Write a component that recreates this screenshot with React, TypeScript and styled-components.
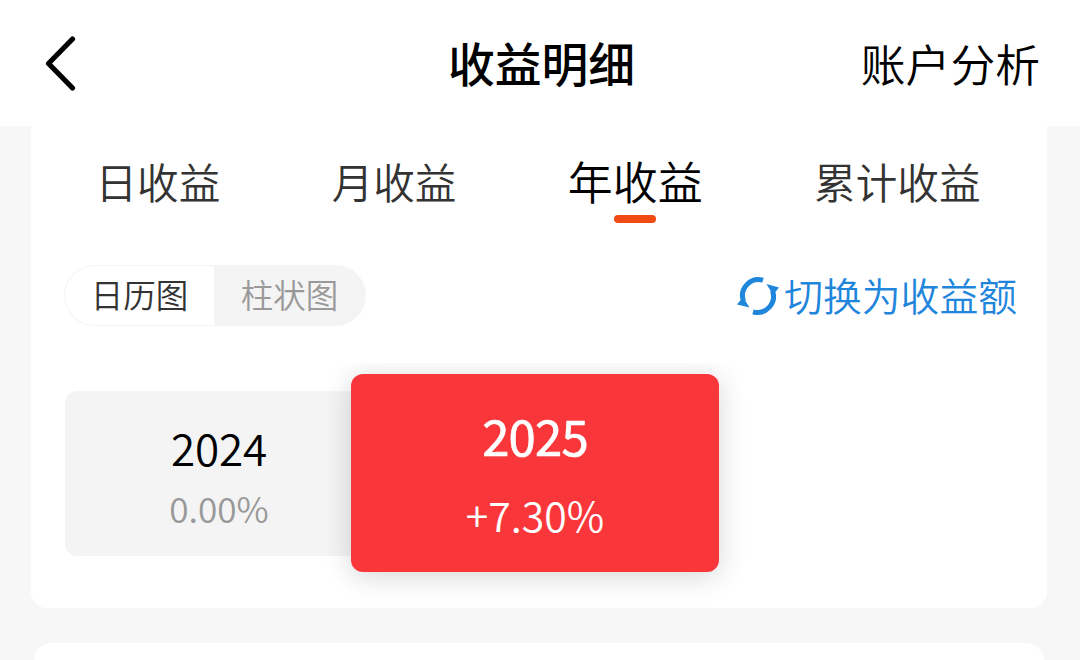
import React from 'react';
import styled, { createGlobalStyle } from 'styled-components';

const GlobalStyle = createGlobalStyle`
  * {
    box-sizing: border-box;
  }

  body {
    margin: 0;
    background: #f7f7f7;
    font-family: 'Noto Sans CJK SC', sans-serif;
    font-weight: 350;
    color: #000;
  }

  button {
    padding: 0;
    border: 0;
    background: none;
    font: inherit;
    color: inherit;
    white-space: nowrap;
  }
`;

const SPage = styled.div`
  height: 660px;
  overflow: hidden;
`;

const SHeader = styled.header`
  display: grid;
  grid-template-columns: 1fr auto 1fr;
  align-items: center;
  height: 126px;
  padding: 0 40px 0 43px;
  background: #fff;
`;

const SBackButton = styled.button`
  display: flex;
  padding-left: 1px;
`;

const STitle = styled.h1`
  margin: 0 0 3px;
  font-size: 46.8px;
  line-height: 60px;
  font-weight: 500;
`;

const SHeaderLink = styled.button`
  justify-self: end;
  font-size: 44.8px;
  line-height: 60px;
`;

const SCard = styled.section`
  height: 482px;
  margin: 0 33px 35px 31px;
  border-radius: 0 0 16px 16px;
  background: #fff;
`;

const SNextCard = styled.section`
  height: 60px;
  margin: 0 36px 0 34px;
  border-radius: 18px;
  background: #fff;
`;

const STabs = styled.nav`
  display: flex;
  justify-content: space-between;
  height: 139px;
  padding: 25px 66.5px 0 64.5px;
`;

const STab = styled.button<{ $active?: boolean }>`
  display: flex;
  flex-direction: column;
  align-items: center;
  height: 72px;
  font-size: ${(props) => (props.$active ? 45 : 41.6)}px;
  line-height: 60px;
  color: ${(props) => (props.$active ? '#000' : '#333')};

  &::after {
    content: '';
    display: ${(props) => (props.$active ? 'block' : 'none')};
    width: 42px;
    height: 8px;
    margin-top: 4px;
    border-radius: 4px;
    background: #f04b14;
  }
`;

const SToolbar = styled.div`
  display: flex;
  align-items: center;
  justify-content: space-between;
  height: 61px;
  padding: 0 30px 0 33px;
`;

const SToggle = styled.div`
  display: flex;
  width: 302px;
  height: 61px;
  padding: 1px;
  border-radius: 31px;
  background: #f4f4f4;
`;

const SToggleItem = styled.button<{ $active?: boolean }>`
  width: ${(props) => (props.$active ? 149 : 151)}px;
  padding-bottom: 3px;
  border-radius: 30px 0 0 30px;
  background: ${(props) => (props.$active ? '#fff' : 'transparent')};
  color: ${(props) => (props.$active ? '#333' : '#999')};
  font-size: 32.5px;
  line-height: 56px;
`;

const SSwitchButton = styled.button`
  display: flex;
  align-items: center;
  gap: 5px;
  color: #1f86dc;
  font-size: 38.8px;
  line-height: 57px;
`;

const SSwitchText = styled.span`
  padding-bottom: 3px;
`;

const SYears = styled.div`
  display: flex;
  align-items: center;
  height: 245px;
  margin-top: 37px;
  padding: 0 34px 25px;
  overflow: hidden;
`;

const SYear = styled.div<{ $selected?: boolean }>`
  display: flex;
  flex-direction: column;
  align-items: center;
  width: ${(props) => (props.$selected ? 368 : 286)}px;
  height: ${(props) => (props.$selected ? 198 : 165)}px;
  padding: ${(props) => (props.$selected ? '30px 0 0' : '25px 0 0 22px')};
  border-radius: ${(props) => (props.$selected ? '12px' : '12px 0 0 12px')};
  background: ${(props) => (props.$selected ? '#f9373a' : '#f4f4f4')};
  box-shadow: ${(props) =>
    props.$selected ? '0 4px 28px rgba(0, 0, 0, 0.17)' : 'none'};
  color: ${(props) => (props.$selected ? '#fff' : '#000')};
`;

const SYearLabel = styled.div<{ $selected?: boolean }>`
  font-size: ${(props) => (props.$selected ? 49 : 44)}px;
  line-height: 62px;
  font-weight: ${(props) => (props.$selected ? 400 : 350)};
  letter-spacing: ${(props) => (props.$selected ? -0.8 : -0.1)}px;
  -webkit-text-stroke: ${(props) => (props.$selected ? 0.7 : 0)}px currentColor;
`;

const SYearRate = styled.div<{ $selected?: boolean }>`
  margin-top: ${(props) => (props.$selected ? 18 : 0)}px;
  font-size: ${(props) => (props.$selected ? 41 : 35.2)}px;
  line-height: 60px;
  color: ${(props) => (props.$selected ? '#fff' : '#999')};
`;

const tabs = ['日收益', '月收益', '年收益', '累计收益'];

const years = [
  { year: '2024', rate: '0.00%' },
  { year: '2025', rate: '+7.30%', selected: true },
];

const BackIcon: React.FC = () => (
  <svg width="34" height="56" viewBox="0 0 34 56" fill="none">
    <path
      d="M28.5 4 L4.5 28.5 L28.5 53"
      stroke="#000"
      strokeWidth="5.2"
      strokeLinecap="round"
      strokeLinejoin="round"
    />
  </svg>
);

const SwitchIcon: React.FC = () => (
  <svg width="42" height="40" viewBox="0 0 42 40" fill="none">
    <path
      d="M26 4.2 A16 16 0 0 0 6.5 25"
      stroke="#1f86dc"
      strokeWidth="5"
    />
    <path
      d="M16 35.8 A16 16 0 0 0 35.5 15"
      stroke="#1f86dc"
      strokeWidth="5"
    />
    <path d="M0 28.5 L6 21 L12.5 31.5 Z" fill="#1f86dc" />
    <path d="M42 11.5 L36 19 L29.5 8 Z" fill="#1f86dc" />
  </svg>
);

const App: React.FC = () => {
  return (
    <SPage>
      <GlobalStyle />
      <SHeader>
        <SBackButton>
          <BackIcon />
        </SBackButton>
        <STitle>收益明细</STitle>
        <SHeaderLink>账户分析</SHeaderLink>
      </SHeader>
      <SCard>
        <STabs>
          {tabs.map((tab) => (
            <STab key={tab} $active={tab === '年收益'}>
              {tab}
            </STab>
          ))}
        </STabs>
        <SToolbar>
          <SToggle>
            <SToggleItem $active>日历图</SToggleItem>
            <SToggleItem>柱状图</SToggleItem>
          </SToggle>
          <SSwitchButton>
            <SwitchIcon />
            <SSwitchText>切换为收益额</SSwitchText>
          </SSwitchButton>
        </SToolbar>
        <SYears>
          {years.map(({ year, rate, selected }) => (
            <SYear key={year} $selected={selected}>
              <SYearLabel $selected={selected}>{year}</SYearLabel>
              <SYearRate $selected={selected}>{rate}</SYearRate>
            </SYear>
          ))}
        </SYears>
      </SCard>
      <SNextCard />
    </SPage>
  );
};

export default App;
